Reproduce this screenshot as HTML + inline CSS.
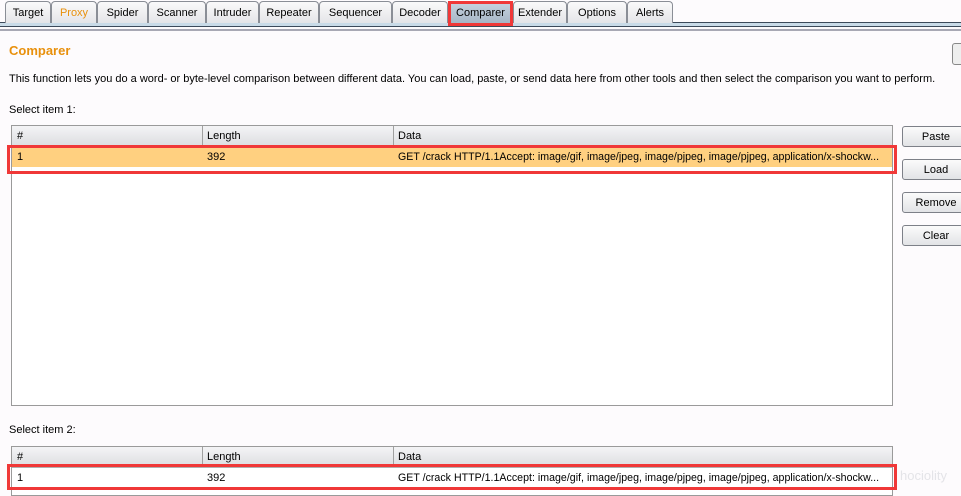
<!DOCTYPE html><html><head><style>
body{margin:0;width:961px;height:491px;overflow:hidden;background:#fdfbfd;font-family:"Liberation Sans",sans-serif;font-size:11px;color:#000;position:relative}
.a{position:absolute;white-space:nowrap}
.tab{position:absolute;top:1px;height:22px;background:linear-gradient(#fafafa,#e4e5e8);border:1px solid #8a8e96;border-bottom:none;border-radius:4px 4px 0 0;box-sizing:border-box;text-align:center;line-height:23px;font-size:11px}
.tbl{position:absolute;left:11px;width:882px;border:1px solid #9a9a9a;background:#fff;box-sizing:border-box;overflow:hidden}
.hd{position:absolute;left:0;top:0;right:0;height:20px;background:linear-gradient(#f4f4f6,#dcdde0);border-bottom:1px solid #b0b0b0}
.c{position:absolute;line-height:21px;font-size:11px;white-space:nowrap}
.d{letter-spacing:0.02px;font-size:10.6px}
.sep{position:absolute;top:0;width:1px;height:20px;background:#a0a0a0}
.btn{position:absolute;left:902px;width:68px;height:21px;border:1px solid #7d8088;border-radius:3px;background:linear-gradient(#fbfbfb,#e2e3e6);box-sizing:border-box;text-align:center;line-height:20px;font-size:11px}
.red{position:absolute;border:3px solid #f03838;box-sizing:border-box}
</style></head><body>
<div class="a" style="left:0;top:22px;width:961px;height:5px;background:#c9dbe8;border-top:1px solid #3c4a5a;border-bottom:1px solid #3c4a5a;box-sizing:border-box"></div>
<div class="a" style="left:0;top:29px;width:961px;height:2px;background:#a8a8b4"></div>
<div class="tab" style="left:5px;width:46px">Target</div>
<div class="tab" style="left:51px;width:46px;color:#e8900c">Proxy</div>
<div class="tab" style="left:97px;width:51px">Spider</div>
<div class="tab" style="left:148px;width:58px">Scanner</div>
<div class="tab" style="left:206px;width:53px">Intruder</div>
<div class="tab" style="left:259px;width:60px">Repeater</div>
<div class="tab" style="left:319px;width:73px">Sequencer</div>
<div class="tab" style="left:392px;width:56px">Decoder</div>
<div class="tab" style="left:448px;width:65px;background:linear-gradient(#c8d4e0,#a6b6c6)">Comparer</div>
<div class="tab" style="left:513px;width:54px">Extender</div>
<div class="tab" style="left:567px;width:60px">Options</div>
<div class="tab" style="left:627px;width:46px">Alerts</div>
<div class="red" style="left:448px;top:1px;width:65px;height:25px"></div>
<div class="a" style="left:9px;top:43px;font-size:13px;font-weight:bold;color:#e8900c">Comparer</div>
<div class="a" style="left:952px;top:43px;width:14px;height:20px;border:1px solid #888;border-radius:3px;background:#eee"></div>
<div class="a" style="left:9px;top:73px">This function lets you do a word- or byte-level comparison between different data. You can load, paste, or send data here from other tools and then select the comparison you want to perform.</div>
<div class="a" style="left:9px;top:104px">Select item 1:</div>
<div class="tbl" style="top:125px;height:281px">
<div class="hd"><div class="c" style="left:5px">#</div><div class="sep" style="left:190px"></div><div class="c" style="left:195px">Length</div><div class="sep" style="left:381px"></div><div class="c" style="left:386px">Data</div></div>
<div class="a" style="left:0;top:21px;width:880px;height:20px;background:#ffd080"><div class="c" style="left:5px">1</div><div class="c" style="left:195px">392</div><div class="c d" style="left:386px">GET /crack HTTP/1.1Accept: image/gif, image/jpeg, image/pjpeg, image/pjpeg, application/x-shockw...</div></div>
</div>
<div class="red" style="left:7px;top:145px;width:890px;height:29px"></div>
<div class="btn" style="top:126px">Paste</div>
<div class="btn" style="top:159px">Load</div>
<div class="btn" style="top:192px">Remove</div>
<div class="btn" style="top:225px">Clear</div>
<div class="a" style="left:9px;top:424px">Select item 2:</div>
<div class="tbl" style="top:446px;height:50px">
<div class="hd"><div class="c" style="left:5px">#</div><div class="sep" style="left:190px"></div><div class="c" style="left:195px">Length</div><div class="sep" style="left:381px"></div><div class="c" style="left:386px">Data</div></div>
<div class="a" style="left:0;top:21px;width:880px;height:20px;background:#fff"><div class="c" style="left:5px">1</div><div class="c" style="left:195px">392</div><div class="c d" style="left:386px">GET /crack HTTP/1.1Accept: image/gif, image/jpeg, image/pjpeg, image/pjpeg, application/x-shockw...</div></div>
</div>
<div class="red" style="left:7px;top:464px;width:890px;height:26px"></div>
<div class="a" style="left:900px;top:468px;color:#e4e4e8;font-size:13px">hociolity</div>
</body></html>
